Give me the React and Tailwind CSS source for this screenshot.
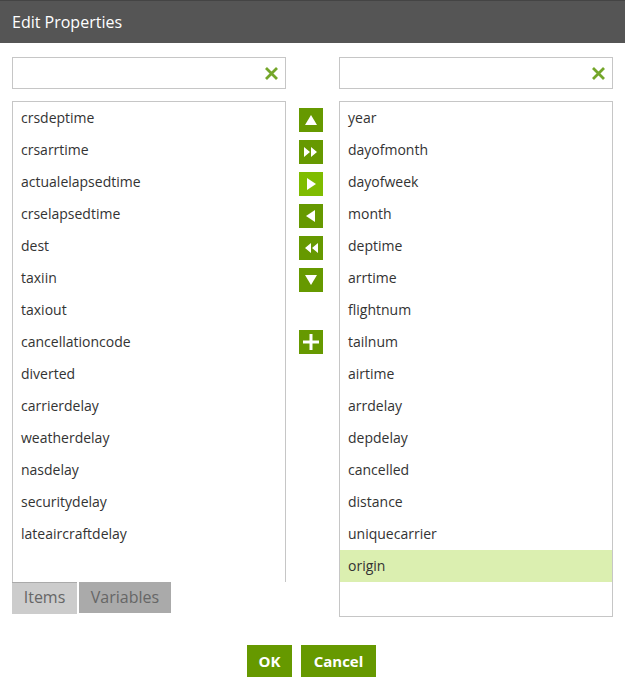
import React from "react";

const left = ["crsdeptime","crsarrtime","actualelapsedtime","crselapsedtime","dest","taxiin","taxiout","cancellationcode","diverted","carrierdelay","weatherdelay","nasdelay","securitydelay","lateaircraftdelay"];
const right = ["year","dayofmonth","dayofweek","month","deptime","arrtime","flightnum","tailnum","airtime","arrdelay","depdelay","cancelled","distance","uniquecarrier","origin"];

function XIcon() {
  return (
    <svg width="15" height="15" viewBox="0 0 15 15">
      <path d="M2 2 L13 13 M13 2 L2 13" stroke="#74a62a" strokeWidth="2.8" strokeLinecap="butt" />
    </svg>
  );
}

function Search() {
  return (
    <div className="h-[32px] border border-[#c6c6c6] flex items-center justify-end pr-[6px] bg-white">
      <XIcon />
    </div>
  );
}

function Btn({ children, light, className = "" }) {
  return (
    <div className={`w-[24px] h-[24px] flex items-center justify-center ${light ? "bg-[#7fbc00]" : "bg-[#669900]"} ${className}`}>
      <svg width="24" height="24" viewBox="0 0 24 24">{children}</svg>
    </div>
  );
}

export default function App() {
  return (
    <div className="w-[625px] h-[693px] bg-white" style={{ fontFamily: '"Open Sans", sans-serif' }}>
      <div className="h-[43px] bg-[#555555] border-t border-[#444] flex items-center pl-[12px] pb-[1px] text-white text-[16px]">
        Edit Properties
      </div>
      <div className="flex pl-[12px] pt-[14px]">
        <div className="w-[274px] flex flex-col">
          <Search />
          <div className="mt-[12px] h-[481px] border-t border-x border-[#c6c6c6]">
            {left.map((t) => (
              <div key={t} className="h-[32px] flex items-center pl-[8px] pb-[1px] text-[14px] text-[#333]">{t}</div>
            ))}
          </div>
          <div className="flex gap-[2px] h-[32px] text-[16px] text-[#666]">
            <div className="w-[65px] bg-[#cccccc] flex items-center justify-center border-t border-[#aaa] pb-[3px]">Items</div>
            <div className="w-[92px] h-[31px] bg-[#aaaaaa] flex items-center justify-center pb-[2px]">Variables</div>
          </div>
        </div>
        <div className="w-[24px] ml-[13px] pt-[51px] flex flex-col gap-[8px]">
          <Btn><path d="M6 17 L12 7 L18 17 Z" fill="white" /></Btn>
          <Btn><path d="M5 7 L11 12 L5 17 Z M12 7 L18 12 L12 17 Z" fill="white" /></Btn>
          <Btn light><path d="M8 6 L17 12 L8 18 Z" fill="white" /></Btn>
          <Btn><path d="M16 6 L7 12 L16 18 Z" fill="white" /></Btn>
          <Btn><path d="M12 7 L6 12 L12 17 Z M19 7 L13 12 L19 17 Z" fill="white" /></Btn>
          <Btn><path d="M6 7 L18 7 L12 17 Z" fill="white" /></Btn>
          <Btn className="mt-[30px]"><path d="M12 4 V20 M4 12 H20" stroke="white" strokeWidth="3" /></Btn>
        </div>
        <div className="w-[274px] ml-[16px] flex flex-col">
          <Search />
          <div className="mt-[12px] h-[516px] border border-[#c6c6c6]">
            {right.map((t) => (
              <div key={t} className={`h-[32px] flex items-center pl-[8px] pb-[1px] text-[14px] text-[#333] ${t === "origin" ? "bg-[#dbefb0]" : ""}`}>{t}</div>
            ))}
          </div>
        </div>
      </div>
      <div className="flex justify-center gap-[9px] mt-[28px] pr-[2px]">
        <div className="w-[45px] h-[32px] bg-[#669900] text-white font-bold text-[15px] flex items-center justify-center">OK</div>
        <div className="w-[75px] h-[32px] bg-[#669900] text-white font-bold text-[15px] flex items-center justify-center">Cancel</div>
      </div>
    </div>
  );
}
